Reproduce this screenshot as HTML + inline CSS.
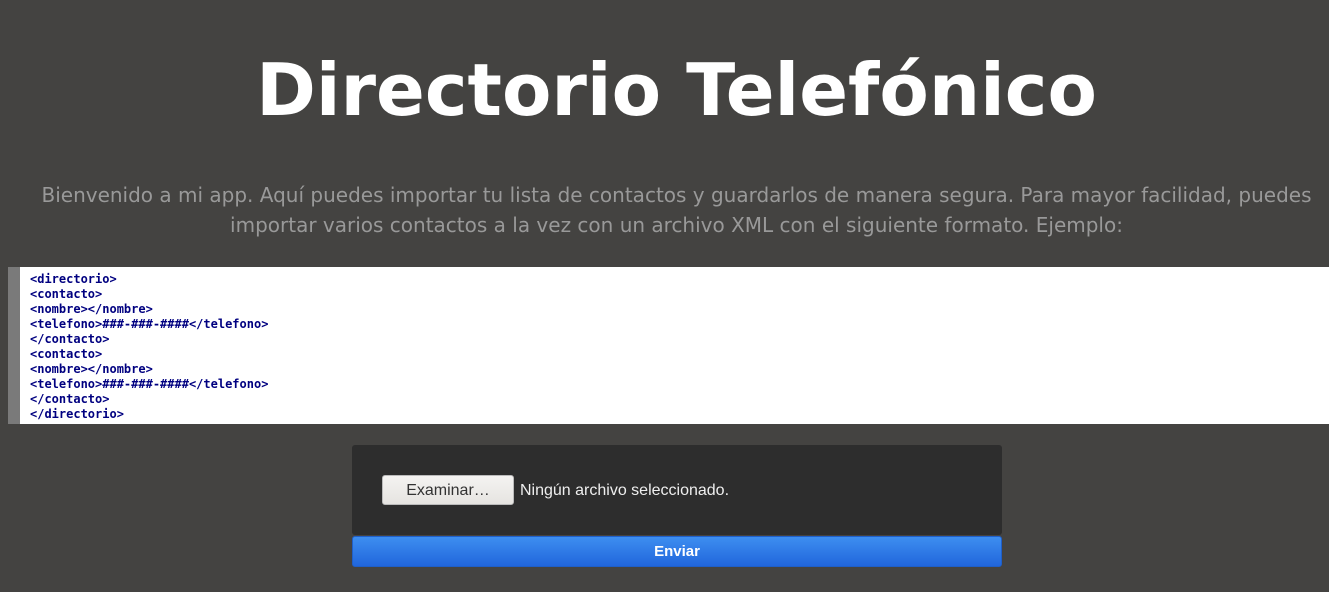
<!DOCTYPE html>
<html><head><meta charset="utf-8"><style>
html,body{margin:0;padding:0;background:#444341;width:1329px;height:592px;overflow:hidden;font-family:"DejaVu Sans","Liberation Sans",sans-serif;}
h1{position:absolute;top:45px;left:12px;width:1329px;margin:0;text-align:center;color:#fff;font-size:72px;font-weight:bold;line-height:90px;}
p.intro{position:absolute;top:180px;left:12px;width:1329px;margin:0;text-align:center;color:#999;font-size:20px;line-height:30px;}
.code{position:absolute;top:267px;left:8px;height:157px;background:#fff;border-left:12px solid #7a7a7a;box-sizing:border-box;width:1321px;padding:5px 0 0 10px;font-family:"DejaVu Sans Mono",monospace;font-weight:bold;font-size:12px;line-height:15px;color:#000080;white-space:pre;}
.box{position:absolute;top:445px;left:352px;width:650px;height:90px;background:#2d2d2d;border-radius:3px;}
.btn{position:absolute;top:475px;left:382px;background:linear-gradient(#f4f3f1,#e6e4e1);border:1px solid #bbb;border-radius:3px;color:#333;font-family:"Liberation Sans",sans-serif;font-size:16px;text-align:center;line-height:30px;box-sizing:border-box;width:132px;height:30px;}
.fn{position:absolute;top:481px;left:520px;color:#eee;font-family:"Liberation Sans",sans-serif;font-size:16px;line-height:20px;}
.send{position:absolute;top:536px;left:352px;width:650px;height:31px;box-sizing:border-box;border:1px solid #1f5fc9;border-radius:3px;background:linear-gradient(#3d8ef0,#2166dc);color:#fff;font-family:"Liberation Sans",sans-serif;font-weight:bold;font-size:15px;text-align:center;line-height:29px;}
</style></head><body>
<h1>Directorio Telefónico</h1>
<p class="intro">Bienvenido a mi app. Aquí puedes importar tu lista de contactos y guardarlos de manera segura. Para mayor facilidad, puedes<br>importar varios contactos a la vez con un archivo XML con el siguiente formato. Ejemplo:</p>
<div class="code">&lt;directorio&gt;
&lt;contacto&gt;
&lt;nombre&gt;&lt;/nombre&gt;
&lt;telefono&gt;###-###-####&lt;/telefono&gt;
&lt;/contacto&gt;
&lt;contacto&gt;
&lt;nombre&gt;&lt;/nombre&gt;
&lt;telefono&gt;###-###-####&lt;/telefono&gt;
&lt;/contacto&gt;
&lt;/directorio&gt;</div>
<div class="box"></div>
<div class="btn">Examinar…</div>
<div class="fn">Ningún archivo seleccionado.</div>
<div class="send">Enviar</div>
</body></html>
